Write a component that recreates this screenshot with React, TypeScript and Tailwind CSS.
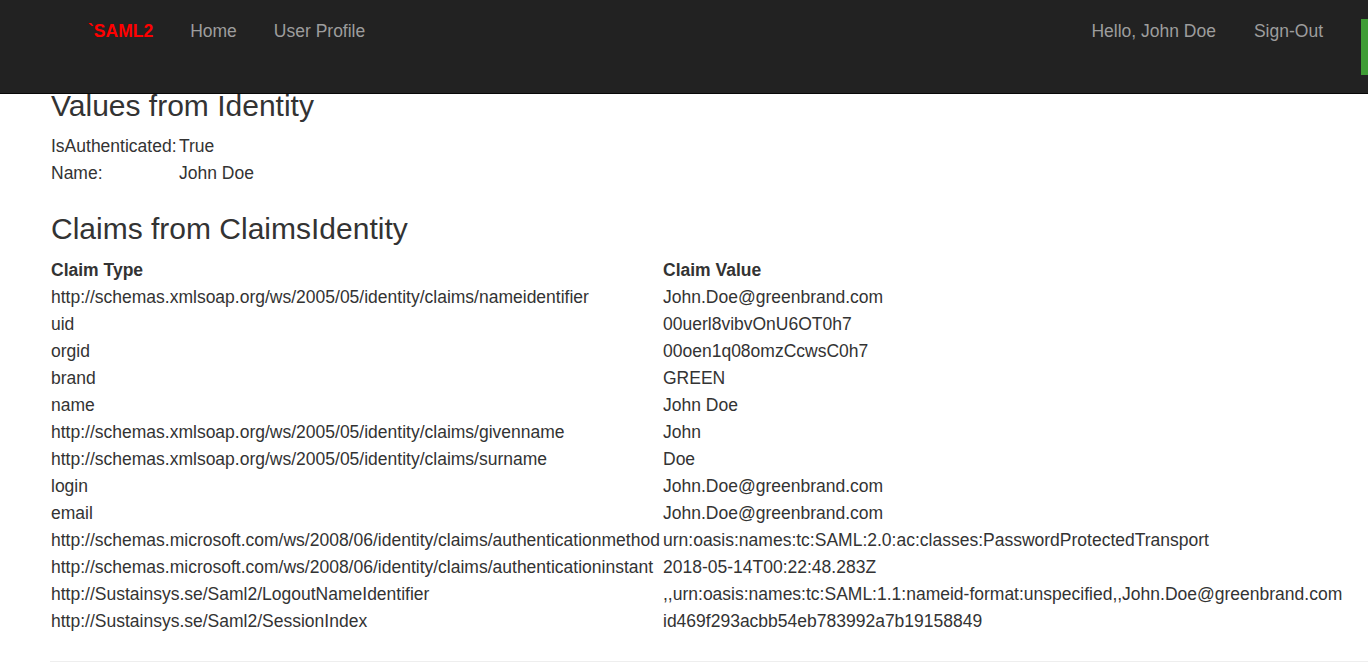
const CLAIMS: [string, string][] = [
  ['http://schemas.xmlsoap.org/ws/2005/05/identity/claims/nameidentifier', 'John.Doe@greenbrand.com'],
  ['uid', '00uerl8vibvOnU6OT0h7'],
  ['orgid', '00oen1q08omzCcwsC0h7'],
  ['brand', 'GREEN'],
  ['name', 'John Doe'],
  ['http://schemas.xmlsoap.org/ws/2005/05/identity/claims/givenname', 'John'],
  ['http://schemas.xmlsoap.org/ws/2005/05/identity/claims/surname', 'Doe'],
  ['login', 'John.Doe@greenbrand.com'],
  ['email', 'John.Doe@greenbrand.com'],
  [
    'http://schemas.microsoft.com/ws/2008/06/identity/claims/authenticationmethod',
    'urn:oasis:names:tc:SAML:2.0:ac:classes:PasswordProtectedTransport',
  ],
  ['http://schemas.microsoft.com/ws/2008/06/identity/claims/authenticationinstant', '2018-05-14T00:22:48.283Z'],
  [
    'http://Sustainsys.se/Saml2/LogoutNameIdentifier',
    ',,urn:oasis:names:tc:SAML:1.1:nameid-format:unspecified,,John.Doe@greenbrand.com',
  ],
  ['http://Sustainsys.se/Saml2/SessionIndex', 'id469f293acbb54eb783992a7b19158849'],
];

function Navbar() {
  return (
    <nav className="fixed top-0 inset-x-0 z-10 h-[94px] bg-[#222] border-b border-[#080808] flex items-start overflow-hidden leading-[27px]">
      {/* Left links */}
      <div className="flex gap-[37px] ml-[88px] mt-[18px]">
        <a className="text-[#f00] font-bold">`SAML2</a>
        <a className="text-[#9d9d9d]">Home</a>
        <a className="text-[#9d9d9d]">User Profile</a>
      </div>

      {/* Right links */}
      <div className="flex gap-[38px] ml-auto mt-[18px]">
        <a className="text-[#9d9d9d]">Hello, John Doe</a>
        <a className="text-[#9d9d9d]">Sign-Out</a>
      </div>
      <div className="shrink-0 w-[7px] h-[56px] mt-[19px] ml-[38px] bg-[#3f9c35]" />
    </nav>
  );
}

export default function App() {
  return (
    <div className="min-h-screen bg-white text-[#333] font-['Liberation_Sans',Arial,sans-serif] text-[17.5px] leading-[27px]">
      <Navbar />

      <main className="pt-[89px] pl-[51px]">
        <h2 className="text-[30px] leading-[33px] font-normal">Values from Identity</h2>

        <table className="mt-[11px] border-collapse">
          <tbody>
            <tr>
              <td className="w-[128px] p-0 align-top">IsAuthenticated:</td>
              <td className="p-0">True</td>
            </tr>
            <tr>
              <td className="p-0 align-top">Name:</td>
              <td className="p-0">John Doe</td>
            </tr>
          </tbody>
        </table>

        <h2 className="mt-[25px] text-[30px] leading-[33px] font-normal">Claims from ClaimsIdentity</h2>

        <table className="mt-[12px] border-collapse">
          <thead>
            <tr className="text-left font-bold">
              <th className="w-[612px] p-0">Claim Type</th>
              <th className="p-0">Claim Value</th>
            </tr>
          </thead>
          <tbody>
            {CLAIMS.map(([type, value]) => (
              <tr key={type}>
                <td className="p-0 whitespace-nowrap">{type}</td>
                <td className="p-0 whitespace-nowrap">{value}</td>
              </tr>
            ))}
          </tbody>
        </table>

        <hr className="-ml-px mt-[26px] border-t border-[#eee]" />
      </main>
    </div>
  );
}
